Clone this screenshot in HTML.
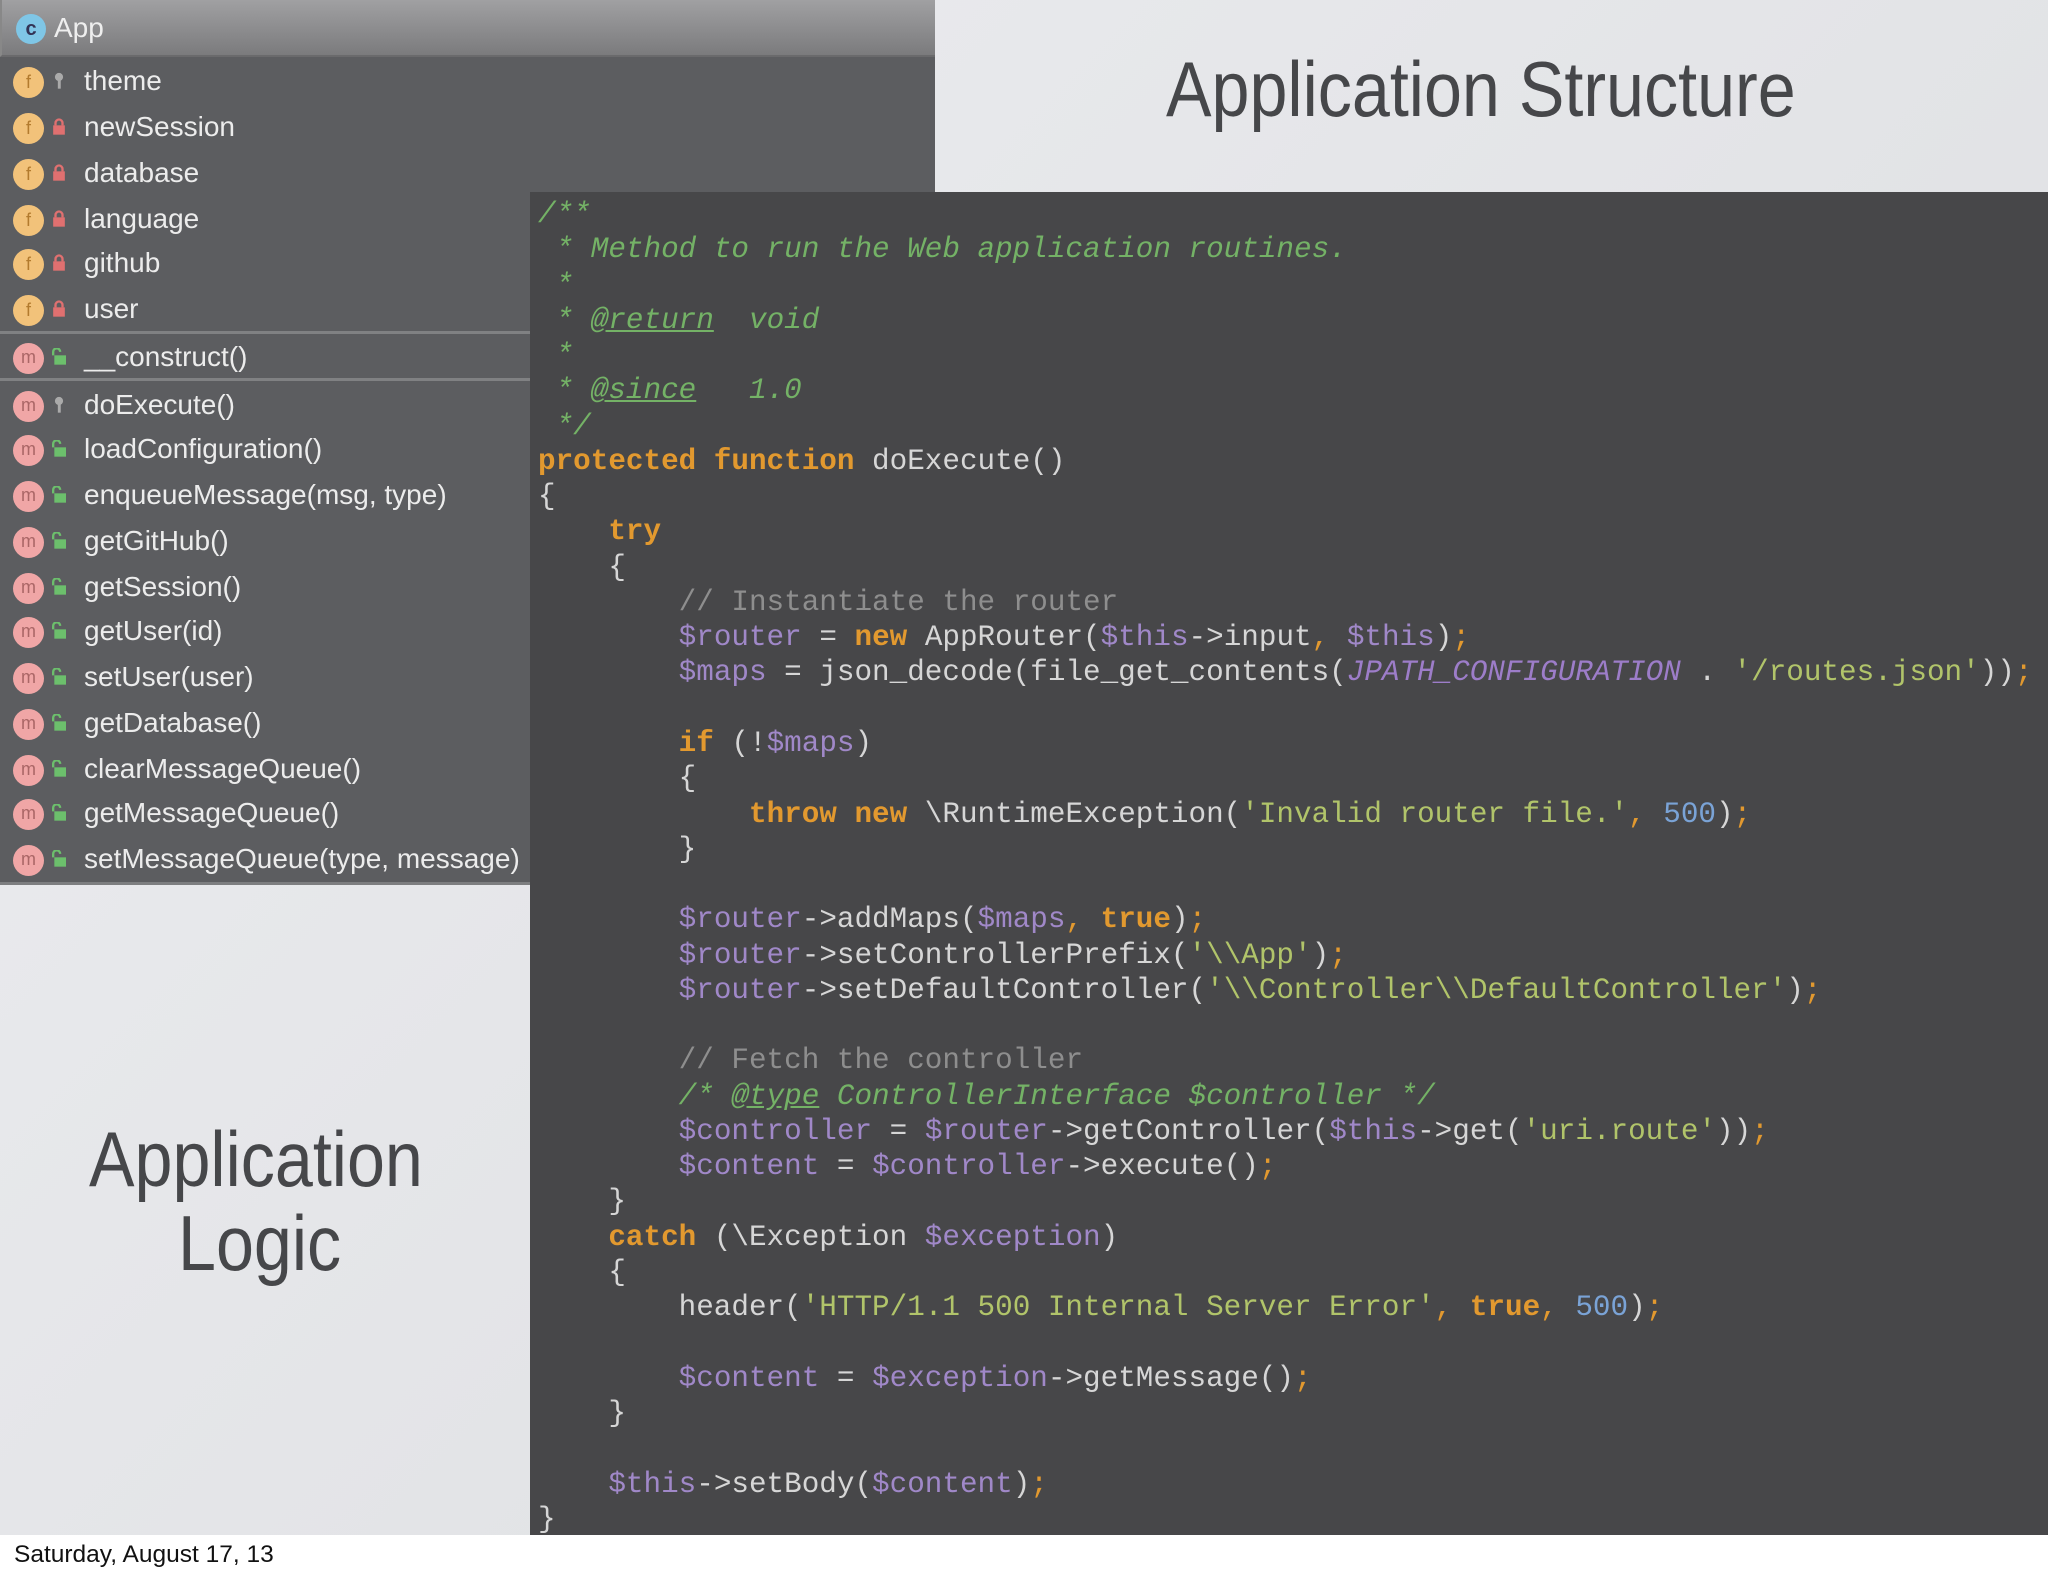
<!DOCTYPE html>
<html><head><meta charset="utf-8">
<style>
*{margin:0;padding:0;box-sizing:border-box}
html,body{width:2048px;height:1576px;overflow:hidden}
body{position:relative;background:linear-gradient(135deg,#ecedf0 0%,#e2e3e6 60%,#dcdde0 100%);font-family:"Liberation Sans",sans-serif}
.title{position:absolute;color:#46474a;font-size:78px;font-weight:300;white-space:nowrap;transform-origin:0 0}
#left{position:absolute;left:0;top:0;width:935px;height:192px;background:#5c5d60}
#left2{position:absolute;left:0;top:192px;width:530px;height:693px;background:#5c5d60;border-bottom:3px solid #7d7e80}
#hdr{position:absolute;left:0;top:0;width:935px;height:57px;background:linear-gradient(#a0a0a2,#7b7b7d);border-bottom:2px solid #6a6a6c;border-left:2px solid #888}
#hdr span{position:absolute;left:52px;top:12px;font-size:28px;color:#eee}
.appicon{position:absolute;left:14px;top:14px;width:30px;height:30px;border-radius:50%;background:#7fc6e6;color:#335;font-size:20px;text-align:center;line-height:30px;font-weight:bold}
.row{position:absolute;left:0;height:46px;font-size:28px;color:#ececec;white-space:nowrap}
.row .t{position:absolute;left:84px;top:6px}
.fi{position:absolute;left:13px;top:8px;width:31px;height:31px;border-radius:50%;background:#f2c27a;color:#b37b2e;font-size:18px;text-align:center;line-height:31px}
.mi{position:absolute;left:13px;top:8px;width:31px;height:31px;border-radius:50%;background:#f0a6a6;color:#a66;font-size:18px;text-align:center;line-height:29px}
.lk{position:absolute;left:52px;top:13px;width:14px;height:17px}
.sep{position:absolute;left:0;width:530px;height:3px;background:#808183}
#code{position:absolute;left:530px;top:192px;width:1518px;height:1343px;background:#474749}
pre{position:absolute;left:8px;top:5px;font-family:"Liberation Mono",monospace;font-size:29.3px;line-height:35.27px;color:#d6d6d6;letter-spacing:0}
.c{color:#74b266;font-style:italic}
.d{color:#74b266;font-style:italic;text-decoration:underline}
.k{color:#e2992f;font-weight:bold}
.v{color:#a088c8}
.s{color:#b1c46a}
.n{color:#7aa3d6}
.g{color:#8e8e8e}
.i{color:#9d7dc9;font-style:italic}
.o{color:#e2992f}
#foot{position:absolute;left:0;top:1535px;width:2048px;height:41px;background:#fff}
#foot span{position:absolute;left:14px;top:6px;font-size:24.5px;color:#111}
</style></head><body>
<div class="title" style="left:1166px;top:44px;transform:scaleX(0.875)">Application Structure</div>
<div class="title" style="left:89px;top:1114px;transform:scaleX(0.875)">Application</div>
<div class="title" style="left:178px;top:1198px;transform:scaleX(0.875)">Logic</div>

<div id="left"></div>
<div id="left2"></div>
<div id="hdr"><div class="appicon">c</div><span>App</span></div>

<div class="row" style="top:59px"><div class="fi">f</div><svg class="lk" viewBox="0 0 12 14"><circle cx="6" cy="4" r="3.5" fill="#aaa"/><rect x="5" y="6" width="2.5" height="8" fill="#aaa"/></svg><span class="t">theme</span></div>
<div class="row" style="top:105px"><div class="fi">f</div><svg class="lk" viewBox="0 0 12 14"><path d="M3 6V4a3 3 0 0 1 6 0v2" stroke="#e07070" stroke-width="2" fill="none"/><rect x="1" y="6" width="10" height="8" fill="#e07070"/></svg><span class="t">newSession</span></div>
<div class="row" style="top:151px"><div class="fi">f</div><svg class="lk" viewBox="0 0 12 14"><path d="M3 6V4a3 3 0 0 1 6 0v2" stroke="#e07070" stroke-width="2" fill="none"/><rect x="1" y="6" width="10" height="8" fill="#e07070"/></svg><span class="t">database</span></div>
<div class="row" style="top:197px"><div class="fi">f</div><svg class="lk" viewBox="0 0 12 14"><path d="M3 6V4a3 3 0 0 1 6 0v2" stroke="#e07070" stroke-width="2" fill="none"/><rect x="1" y="6" width="10" height="8" fill="#e07070"/></svg><span class="t">language</span></div>
<div class="row" style="top:241px"><div class="fi">f</div><svg class="lk" viewBox="0 0 12 14"><path d="M3 6V4a3 3 0 0 1 6 0v2" stroke="#e07070" stroke-width="2" fill="none"/><rect x="1" y="6" width="10" height="8" fill="#e07070"/></svg><span class="t">github</span></div>
<div class="row" style="top:287px"><div class="fi">f</div><svg class="lk" viewBox="0 0 12 14"><path d="M3 6V4a3 3 0 0 1 6 0v2" stroke="#e07070" stroke-width="2" fill="none"/><rect x="1" y="6" width="10" height="8" fill="#e07070"/></svg><span class="t">user</span></div>
<div class="sep" style="top:331px"></div>
<div class="row" style="top:335px"><div class="mi">m</div><svg class="lk" viewBox="0 0 12 14"><path d="M1 6V3a3 3 0 0 1 6 0" stroke="#6cbf6c" stroke-width="2" fill="none"/><rect x="2" y="6" width="10" height="8" fill="#6cbf6c"/></svg><span class="t">__construct()</span></div>
<div class="sep" style="top:378px"></div>
<div class="row" style="top:383px"><div class="mi">m</div><svg class="lk" viewBox="0 0 12 14"><circle cx="6" cy="4" r="3.5" fill="#aaa"/><rect x="5" y="6" width="2.5" height="8" fill="#aaa"/></svg><span class="t">doExecute()</span></div>
<div class="row" style="top:427px"><div class="mi">m</div><svg class="lk" viewBox="0 0 12 14"><path d="M1 6V3a3 3 0 0 1 6 0" stroke="#6cbf6c" stroke-width="2" fill="none"/><rect x="2" y="6" width="10" height="8" fill="#6cbf6c"/></svg><span class="t">loadConfiguration()</span></div>
<div class="row" style="top:473px"><div class="mi">m</div><svg class="lk" viewBox="0 0 12 14"><path d="M1 6V3a3 3 0 0 1 6 0" stroke="#6cbf6c" stroke-width="2" fill="none"/><rect x="2" y="6" width="10" height="8" fill="#6cbf6c"/></svg><span class="t">enqueueMessage(msg, type)</span></div>
<div class="row" style="top:519px"><div class="mi">m</div><svg class="lk" viewBox="0 0 12 14"><path d="M1 6V3a3 3 0 0 1 6 0" stroke="#6cbf6c" stroke-width="2" fill="none"/><rect x="2" y="6" width="10" height="8" fill="#6cbf6c"/></svg><span class="t">getGitHub()</span></div>
<div class="row" style="top:565px"><div class="mi">m</div><svg class="lk" viewBox="0 0 12 14"><path d="M1 6V3a3 3 0 0 1 6 0" stroke="#6cbf6c" stroke-width="2" fill="none"/><rect x="2" y="6" width="10" height="8" fill="#6cbf6c"/></svg><span class="t">getSession()</span></div>
<div class="row" style="top:609px"><div class="mi">m</div><svg class="lk" viewBox="0 0 12 14"><path d="M1 6V3a3 3 0 0 1 6 0" stroke="#6cbf6c" stroke-width="2" fill="none"/><rect x="2" y="6" width="10" height="8" fill="#6cbf6c"/></svg><span class="t">getUser(id)</span></div>
<div class="row" style="top:655px"><div class="mi">m</div><svg class="lk" viewBox="0 0 12 14"><path d="M1 6V3a3 3 0 0 1 6 0" stroke="#6cbf6c" stroke-width="2" fill="none"/><rect x="2" y="6" width="10" height="8" fill="#6cbf6c"/></svg><span class="t">setUser(user)</span></div>
<div class="row" style="top:701px"><div class="mi">m</div><svg class="lk" viewBox="0 0 12 14"><path d="M1 6V3a3 3 0 0 1 6 0" stroke="#6cbf6c" stroke-width="2" fill="none"/><rect x="2" y="6" width="10" height="8" fill="#6cbf6c"/></svg><span class="t">getDatabase()</span></div>
<div class="row" style="top:747px"><div class="mi">m</div><svg class="lk" viewBox="0 0 12 14"><path d="M1 6V3a3 3 0 0 1 6 0" stroke="#6cbf6c" stroke-width="2" fill="none"/><rect x="2" y="6" width="10" height="8" fill="#6cbf6c"/></svg><span class="t">clearMessageQueue()</span></div>
<div class="row" style="top:791px"><div class="mi">m</div><svg class="lk" viewBox="0 0 12 14"><path d="M1 6V3a3 3 0 0 1 6 0" stroke="#6cbf6c" stroke-width="2" fill="none"/><rect x="2" y="6" width="10" height="8" fill="#6cbf6c"/></svg><span class="t">getMessageQueue()</span></div>
<div class="row" style="top:837px"><div class="mi">m</div><svg class="lk" viewBox="0 0 12 14"><path d="M1 6V3a3 3 0 0 1 6 0" stroke="#6cbf6c" stroke-width="2" fill="none"/><rect x="2" y="6" width="10" height="8" fill="#6cbf6c"/></svg><span class="t">setMessageQueue(type, message)</span></div>

<div id="code"><pre><span class="c">/**</span>
<span class="c"> * Method to run the Web application routines.</span>
<span class="c"> *</span>
<span class="c"> * </span><span class="d">@return</span><span class="c">  void</span>
<span class="c"> *</span>
<span class="c"> * </span><span class="d">@since</span><span class="c">   1.0</span>
<span class="c"> */</span>
<span class="k">protected function</span> doExecute()
{
    <span class="k">try</span>
    {
        <span class="g">// Instantiate the router</span>
        <span class="v">$router</span> = <span class="k">new</span> AppRouter(<span class="v">$this</span>-&gt;input<span class="o">,</span> <span class="v">$this</span>)<span class="o">;</span>
        <span class="v">$maps</span> = json_decode(file_get_contents(<span class="i">JPATH_CONFIGURATION</span> . <span class="s">'/routes.json'</span>))<span class="o">;</span>

        <span class="k">if</span> (!<span class="v">$maps</span>)
        {
            <span class="k">throw new</span> \RuntimeException(<span class="s">'Invalid router file.'</span><span class="o">,</span> <span class="n">500</span>)<span class="o">;</span>
        }

        <span class="v">$router</span>-&gt;addMaps(<span class="v">$maps</span><span class="o">,</span> <span class="k">true</span>)<span class="o">;</span>
        <span class="v">$router</span>-&gt;setControllerPrefix(<span class="s">'\\App'</span>)<span class="o">;</span>
        <span class="v">$router</span>-&gt;setDefaultController(<span class="s">'\\Controller\\DefaultController'</span>)<span class="o">;</span>

        <span class="g">// Fetch the controller</span>
        <span class="c">/* </span><span class="d">@type</span><span class="c"> ControllerInterface $controller */</span>
        <span class="v">$controller</span> = <span class="v">$router</span>-&gt;getController(<span class="v">$this</span>-&gt;get(<span class="s">'uri.route'</span>))<span class="o">;</span>
        <span class="v">$content</span> = <span class="v">$controller</span>-&gt;execute()<span class="o">;</span>
    }
    <span class="k">catch</span> (\Exception <span class="v">$exception</span>)
    {
        header(<span class="s">'HTTP/1.1 500 Internal Server Error'</span><span class="o">,</span> <span class="k">true</span><span class="o">,</span> <span class="n">500</span>)<span class="o">;</span>

        <span class="v">$content</span> = <span class="v">$exception</span>-&gt;getMessage()<span class="o">;</span>
    }

    <span class="v">$this</span>-&gt;setBody(<span class="v">$content</span>)<span class="o">;</span>
}</pre></div>

<div id="foot"><span>Saturday, August 17, 13</span></div>
</body></html>
